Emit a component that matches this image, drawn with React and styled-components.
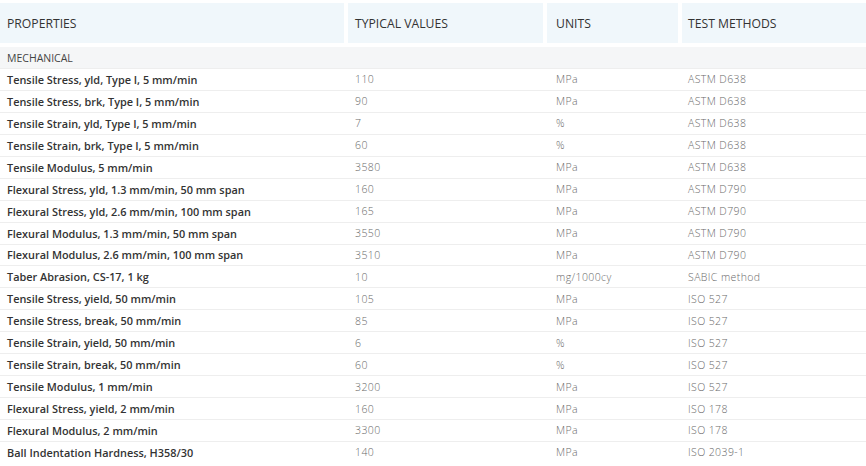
import React from 'react';
import styled, { createGlobalStyle } from 'styled-components';

const GlobalStyle = createGlobalStyle`
  body {
    margin: 0;
    background: #fff;
    font-family: "Open Sans", "Liberation Sans", sans-serif;
  }
`;

const rows = [
  ['Tensile Stress, yld, Type I, 5 mm/min', '110', 'MPa', 'ASTM D638'],
  ['Tensile Stress, brk, Type I, 5 mm/min', '90', 'MPa', 'ASTM D638'],
  ['Tensile Strain, yld, Type I, 5 mm/min', '7', '%', 'ASTM D638'],
  ['Tensile Strain, brk, Type I, 5 mm/min', '60', '%', 'ASTM D638'],
  ['Tensile Modulus, 5 mm/min', '3580', 'MPa', 'ASTM D638'],
  ['Flexural Stress, yld, 1.3 mm/min, 50 mm span', '160', 'MPa', 'ASTM D790'],
  ['Flexural Stress, yld, 2.6 mm/min, 100 mm span', '165', 'MPa', 'ASTM D790'],
  ['Flexural Modulus, 1.3 mm/min, 50 mm span', '3550', 'MPa', 'ASTM D790'],
  ['Flexural Modulus, 2.6 mm/min, 100 mm span', '3510', 'MPa', 'ASTM D790'],
  ['Taber Abrasion, CS-17, 1 kg', '10', 'mg/1000cy', 'SABIC method'],
  ['Tensile Stress, yield, 50 mm/min', '105', 'MPa', 'ISO 527'],
  ['Tensile Stress, break, 50 mm/min', '85', 'MPa', 'ISO 527'],
  ['Tensile Strain, yield, 50 mm/min', '6', '%', 'ISO 527'],
  ['Tensile Strain, break, 50 mm/min', '60', '%', 'ISO 527'],
  ['Tensile Modulus, 1 mm/min', '3200', 'MPa', 'ISO 527'],
  ['Flexural Stress, yield, 2 mm/min', '160', 'MPa', 'ISO 178'],
  ['Flexural Modulus, 2 mm/min', '3300', 'MPa', 'ISO 178'],
  ['Ball Indentation Hardness, H358/30', '140', 'MPa', 'ISO 2039-1'],
];

const Table = styled.table`
  width: 866px;
  margin-top: 3px;
  border-collapse: separate;
  border-spacing: 0;
  table-layout: fixed;
`;

const Head = styled.th`
  width: ${p => p.$w}px;
  height: 44px;
  padding: 0 0 0 ${p => p.$pad}px;
  box-sizing: border-box;
  text-align: left;
  font-weight: 400;
  font-size: 12.2px;
  color: #333;
  background: #f0f7fb;
  background-clip: padding-box;
  border-right: ${p => (p.$last ? 0 : 4)}px solid transparent;
  border-bottom: 4px solid transparent;
`;

const Group = styled.td`
  height: 21px;
  padding: 0 7px;
  font-size: 10.5px;
  color: #444;
  background: #f5f6f7;
`;

const Cell = styled.td`
  height: 21.94px;
  box-sizing: border-box;
  padding: 0 0 0 ${p => p.$pad}px;
  border-top: 1px solid #eeeeee;
  font-size: ${p => (p.$label ? '10.9px' : '10.5px')};
  white-space: nowrap;
  color: ${p => (p.$label ? '#333' : '#6a6a6a')};
  font-weight: ${p => (p.$label ? 600 : 300)};
  letter-spacing: ${p => (p.$label ? '0' : '0.4px')};
`;

const pads = [7, 7, 9, 6];

export default function App() {
  return (
    <>
      <GlobalStyle />
      <Table>
        <thead>
          <tr>
            <Head $w={348} $pad={7}>PROPERTIES</Head>
            <Head $w={199} $pad={7}>TYPICAL VALUES</Head>
            <Head $w={135} $pad={9}>UNITS</Head>
            <Head $w={184} $pad={6} $last>TEST METHODS</Head>
          </tr>
        </thead>
        <tbody>
          <tr>
            <Group colSpan={4}>MECHANICAL</Group>
          </tr>
          {rows.map((r, i) => (
            <tr key={i}>
              {r.map((c, j) => (
                <Cell key={j} $pad={pads[j]} $label={j === 0}>{c}</Cell>
              ))}
            </tr>
          ))}
        </tbody>
      </Table>
    </>
  );
}
